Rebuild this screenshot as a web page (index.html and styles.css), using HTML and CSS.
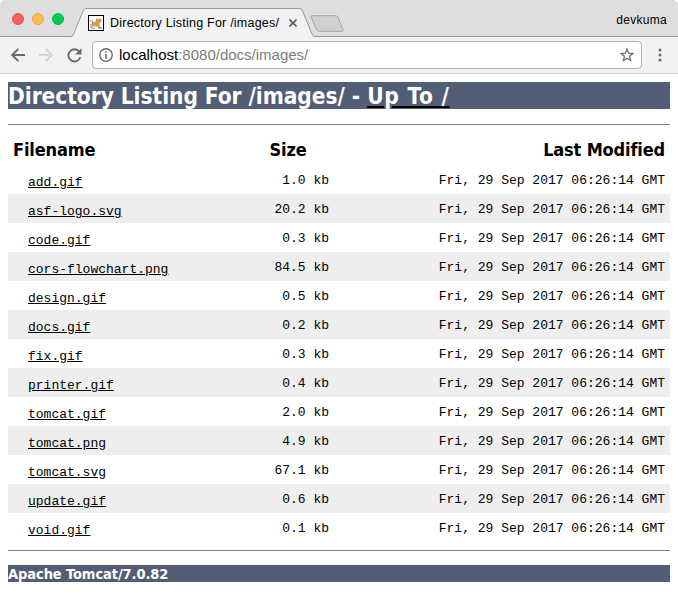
FILE: index.html
```html
<!DOCTYPE html>
<html lang="en">
<head>
<meta charset="utf-8">
<title>Directory Listing For /images/</title>
<link rel="stylesheet" href="styles.css">
</head>
<body>
<header class="browser">
  <div class="tabstrip">
    <div class="lights"><i class="light red"></i><i class="light amber"></i><i class="light green"></i></div>
    <div class="tab">
      <svg class="tab-shape" width="244" height="29" viewBox="0 0 244 29"><path d="M0 28.5 Q1.600 28.500 2.200 27 L12 3 Q13.200 .5 15 .5 H229 Q230.500 .5 231.500 3 L241 26 Q242 28.500 244 28.500 V29 H0Z" fill="#f2f2f2"/><path d="M0 28.500 Q1.600 28.500 2.200 27 L12 3 Q13.200 .5 15 .5 H229 Q230.500 .5 231.500 3 L241 26 Q242 28.500 244 28.500" fill="none" stroke="#999"/></svg>
      <svg class="favicon" width="16" height="16" viewBox="0 0 16 16"><rect x=".5" y=".5" width="15" height="15" fill="#fff" stroke="#000"/><path d="M4 7.500 8 6.500 8 3 9.500 4H12L13.500 3V6.500L11.500 8.500V10.500L13.500 13H11L9 11.500H5L3 13H2L4 10Z" fill="#d0a055"/><path d="M1.500 6Q3.500 4.500 5 7L3.500 10M2 10H3.500M3 13.200H7M10 13.200H14" stroke="#777" stroke-width=".8" fill="none"/></svg>
      <span class="tab-title">Directory Listing For /images/</span>
      <svg class="close" width="8" height="8" viewBox="0 0 8 8"><path d="M.5 .5 7.500 7.500M7.500 .5 .5 7.500" stroke="#5a5a5a" stroke-width="1.600"/></svg>
    </div>
    <svg class="new-tab" width="35" height="18" viewBox="0 0 35 18"><path d="M2 .7H25.500Q27 .7 27.700 2L33 14.500Q33.600 16.300 32 16.300H9Q7.500 16.300 6.800 15L1.200 2.500Q.6 .7 2 .7Z" fill="#d0d0d0" stroke="#a5a5a5"/></svg>
    <span class="profile">devkuma</span>
  </div>
  <div class="toolbar">
    <svg class="back" width="14" height="14" viewBox="0 0 14 14"><path d="M14 7H1.500M7.300 .8 1.200 7l6.100 6.200" fill="none" stroke="#6a6a6a" stroke-width="1.900"/></svg>
    <svg class="forward" width="14" height="14" viewBox="0 0 14 14"><path d="M0 7H12.500M6.700 .8 12.800 7l-6.100 6.200" fill="none" stroke="#d4d4d4" stroke-width="1.900"/></svg>
    <svg class="reload" width="15" height="15" viewBox="0 0 15 15"><path d="M12.400 3.700A6.100 6.100 0 1 0 13.300 9.300" fill="none" stroke="#6a6a6a" stroke-width="1.900"/><path d="M14.500 .3V6.500H8.200Z" fill="#6a6a6a"/></svg>
    <div class="address">
      <svg class="info" width="14" height="14" viewBox="0 0 14 14"><circle cx="7" cy="7" r="6.200" fill="none" stroke="#6a6a6a" stroke-width="1.400"/><path d="M7 3.200V4.700M7 6V10.800" stroke="#6a6a6a" stroke-width="1.600"/></svg>
      <span class="url"><b>localhost</b>:8080/docs/images/</span>
      <svg class="star" width="14" height="14" viewBox="0 0 14 14"><path d="M7 1.300 8.600 5.200 12.900 5.500 9.600 8.300 10.600 12.500 7 10.300 3.400 12.500 4.400 8.300 1.100 5.500 5.400 5.200Z" fill="none" stroke="#6a6a6a" stroke-width="1.300"/></svg>
    </div>
    <svg class="menu" width="4" height="14" viewBox="0 0 4 14"><g fill="#6a6a6a"><circle cx="2" cy="2" r="1.500"/><circle cx="2" cy="7" r="1.500"/><circle cx="2" cy="12" r="1.500"/></g></svg>
  </div>
</header>
<main>
  <h1>Directory Listing For /images/ - <a href="#">Up To /</a></h1>
  <hr>
  <table>
    <thead><tr><th class="name">Filename</th><th class="size">Size</th><th class="date">Last Modified</th></tr></thead>
    <tbody>
      <tr><td class="name"><a href="#">add.gif</a></td><td class="size">1.0 kb</td><td class="date">Fri, 29 Sep 2017 06:26:14 GMT</td></tr>
      <tr><td class="name"><a href="#">asf-logo.svg</a></td><td class="size">20.2 kb</td><td class="date">Fri, 29 Sep 2017 06:26:14 GMT</td></tr>
      <tr><td class="name"><a href="#">code.gif</a></td><td class="size">0.3 kb</td><td class="date">Fri, 29 Sep 2017 06:26:14 GMT</td></tr>
      <tr><td class="name"><a href="#">cors-flowchart.png</a></td><td class="size">84.5 kb</td><td class="date">Fri, 29 Sep 2017 06:26:14 GMT</td></tr>
      <tr><td class="name"><a href="#">design.gif</a></td><td class="size">0.5 kb</td><td class="date">Fri, 29 Sep 2017 06:26:14 GMT</td></tr>
      <tr><td class="name"><a href="#">docs.gif</a></td><td class="size">0.2 kb</td><td class="date">Fri, 29 Sep 2017 06:26:14 GMT</td></tr>
      <tr><td class="name"><a href="#">fix.gif</a></td><td class="size">0.3 kb</td><td class="date">Fri, 29 Sep 2017 06:26:14 GMT</td></tr>
      <tr><td class="name"><a href="#">printer.gif</a></td><td class="size">0.4 kb</td><td class="date">Fri, 29 Sep 2017 06:26:14 GMT</td></tr>
      <tr><td class="name"><a href="#">tomcat.gif</a></td><td class="size">2.0 kb</td><td class="date">Fri, 29 Sep 2017 06:26:14 GMT</td></tr>
      <tr><td class="name"><a href="#">tomcat.png</a></td><td class="size">4.9 kb</td><td class="date">Fri, 29 Sep 2017 06:26:14 GMT</td></tr>
      <tr><td class="name"><a href="#">tomcat.svg</a></td><td class="size">67.1 kb</td><td class="date">Fri, 29 Sep 2017 06:26:14 GMT</td></tr>
      <tr><td class="name"><a href="#">update.gif</a></td><td class="size">0.6 kb</td><td class="date">Fri, 29 Sep 2017 06:26:14 GMT</td></tr>
      <tr><td class="name"><a href="#">void.gif</a></td><td class="size">0.1 kb</td><td class="date">Fri, 29 Sep 2017 06:26:14 GMT</td></tr>
    </tbody>
  </table>
  <hr>
  <h3>Apache Tomcat/7.0.82</h3>
</main>
</body>
</html>
```
FILE: styles.css
```css
* { box-sizing: border-box; }
body { margin: 0; background: #fff; color: #000; font-family: "Liberation Sans", Arial, sans-serif; overflow: hidden; }
svg { display: block; flex: none; }

.tabstrip { display: flex; height: 37px; background: #dedede; border-bottom: 1px solid #999; border-radius: 5px 5px 0 0; }
.lights { display: flex; gap: 8px; margin: 13px 0 0 12px; width: 59px; }
.light { width: 12px; height: 12px; border-radius: 50%; }
.red { background: #fc605c; border: 1px solid #e8504c; }
.amber { background: #fdbc50; border: 1px solid #eba944; }
.green { background: #00ca56; border: 1px solid #00b84c; }
.tab { position: relative; display: flex; width: 244px; height: 29px; margin-top: 8px; padding-left: 17px; }
.tab-shape { position: absolute; left: 0; top: 0; }
.favicon { position: relative; margin-top: 7px; }
.tab-title { position: relative; width: 172px; margin: 7px 0 0 6px; font-size: 12.5px; line-height: 16px; white-space: nowrap; letter-spacing: .22px; }
.close { position: relative; margin: 11px 0 0 7px; }
.new-tab { margin: 15px 0 0 -5px; }
.profile { margin: 12px 11px 0 auto; font-size: 12px; line-height: 16px; letter-spacing: .3px; }

.toolbar { display: flex; align-items: center; height: 37px; padding: 0 16px 0 11px; background: #f2f2f2; border-bottom: 1px solid #cfcfcf; }
.forward { margin-left: 14px; }
.reload { margin-left: 14px; }
.address { display: flex; align-items: center; width: 550px; height: 28px; margin-left: 10px; padding: 0 7px 0 6px; background: #fff; border: 1px solid #b3b3b3; border-radius: 4px; }
.url { margin-left: 6px; font-size: 15px; line-height: 20px; color: #7c7c7c; white-space: nowrap; }
.url b { font-weight: 400; color: #000; }
.star { margin-left: auto; }
.menu { margin-left: auto; }

main { width: 678px; padding: 8px 8px 0; }
h1, h3, th { font-family: "DejaVu Sans Condensed", "DejaVu Sans", Tahoma, sans-serif; font-stretch: condensed; font-weight: 700; white-space: nowrap; }
h1 { height: 27px; margin: 0; padding-top: 1px; background: #525d76; color: #fff; font-size: 22.5px; line-height: 27px; letter-spacing: -.05px; }
a { color: #000; }
h1 a { color: #fff; letter-spacing: .75px; text-decoration: underline #000 2px; text-underline-offset: 2px; text-decoration-skip-ink: auto; }
hr { height: 1px; margin: 15px 0 12px; border: 0; background: #808080; }
table { width: 662px; table-layout: fixed; border-collapse: collapse; }
th { height: 28px; padding: 0 5px 2px; font-size: 18px; line-height: 24px; letter-spacing: -.15px; }
td { height: 29px; padding: 8px 5px 0 0; font-family: "Liberation Mono", "Courier New", monospace; font-size: 13px; line-height: 15px; white-space: nowrap; vertical-align: top; }
.name { width: 221px; text-align: left; }
td.name { padding: 10px 0 0 20px; }
.size { width: 118px; text-align: center; }
td.size { padding-right: 18px; text-align: right; }
.date { text-align: right; }
td.name a { text-underline-offset: 1px; }
tbody tr:nth-child(even) { background: #eee; }
table + hr { margin: 8px 0 14px; }
h3 { height: 17px; margin: 0; padding-top: 1px; background: #525d76; color: #fff; font-size: 14.5px; line-height: 17px; letter-spacing: -.08px; }
```
